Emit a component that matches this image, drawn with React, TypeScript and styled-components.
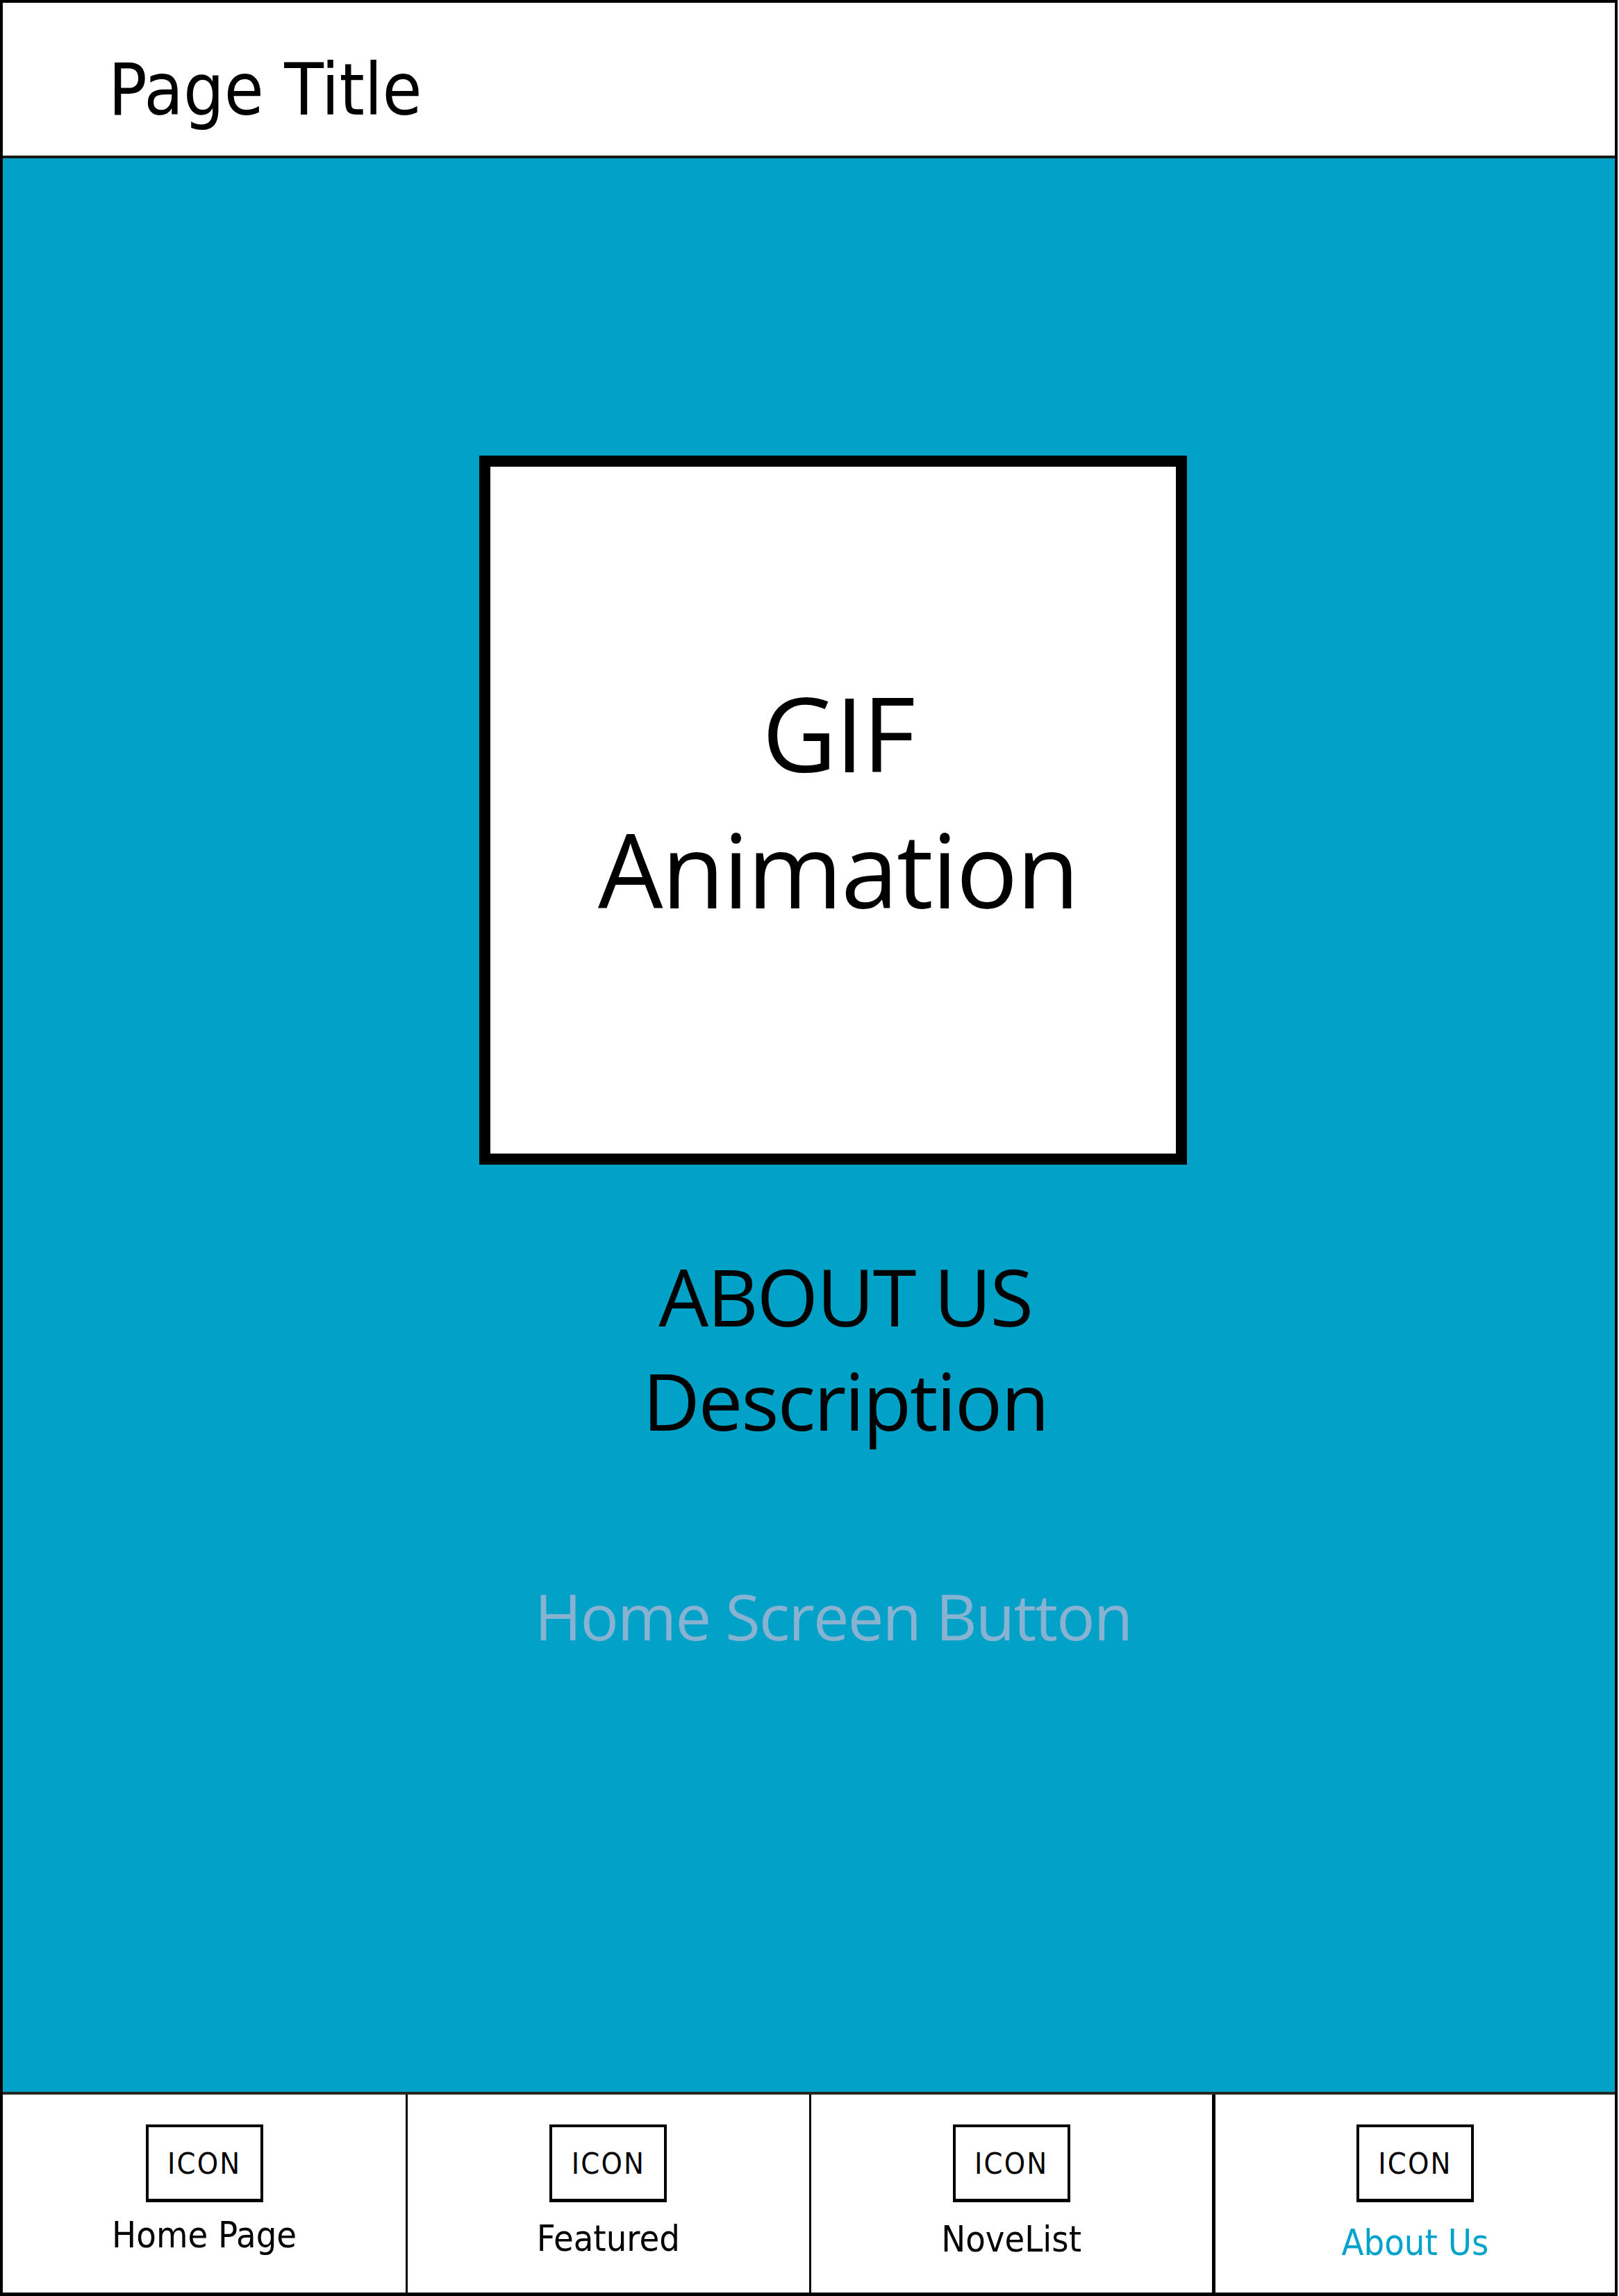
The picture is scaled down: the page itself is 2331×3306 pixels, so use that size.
import React from "react";
import styled, { createGlobalStyle } from "styled-components";

const GlobalStyle = createGlobalStyle`
  html, body {
    margin: 0;
    padding: 0;
    background: #ffffff;
  }
  #root {
    width: 2331px;
  }
`;

const tahomaLike = `"DejaVu Sans Condensed", "DejaVu Sans", "Liberation Sans", sans-serif`;
const myriadLike = `"Open Sans", "Noto Sans", "Liberation Sans", sans-serif`;

const Frame = styled.div`
  box-sizing: border-box;
  width: 2329px;
  height: 3306px;
  display: flex;
  flex-direction: column;
  border: 4px solid #000;
  border-bottom-width: 5px;
  background: #fff;
`;

const Header = styled.header`
  flex: none;
  height: 224px;
  box-sizing: border-box;
  border-bottom: 4px solid #1a1a1a;
  padding: 74px 0 0 152px;
  background: #fff;
`;

const PageTitle = styled.h1`
  margin: 0;
  font-family: ${tahomaLike};
  font-stretch: semi-condensed;
  font-weight: 400;
  font-size: 103px;
  line-height: 1;
  color: #000;
`;

const Main = styled.main`
  flex: 1;
  min-height: 0;
  background: #02a2c8;
  display: flex;
  flex-direction: column;
  align-items: center;
  padding: 428px 0 0 70px;
`;

const GifFrame = styled.div`
  box-sizing: border-box;
  width: 1019px;
  height: 1021px;
  border: 16px solid #000;
  background: #fff;
  display: flex;
  flex-direction: column;
  align-items: center;
  justify-content: center;
  padding: 0 0 27px 14px;
`;

const GifText = styled.div`
  font-family: ${myriadLike};
  font-size: 148px;
  line-height: 196px;
  letter-spacing: -0.015em;
  color: #000;
  text-align: center;
`;

const AboutBlock = styled.div`
  margin: 114px 0 0 35px;
  font-family: ${myriadLike};
  font-size: 114px;
  line-height: 150px;
  letter-spacing: -0.02em;
  color: #000;
  text-align: center;
`;

const HomeScreenButton = styled.button`
  margin-top: 181px;
  padding: 0;
  border: none;
  background: transparent;
  font-family: ${myriadLike};
  font-size: 92px;
  line-height: 1.2;
  letter-spacing: -0.02em;
  color: #88b2d2;
  cursor: pointer;
`;

const Nav = styled.nav`
  flex: none;
  height: 285px;
  border-top: 4px solid #262626;
  display: grid;
  grid-template-columns: repeat(4, 1fr);
  background: #fff;
`;

const Tab = styled.div<{ $divider: number }>`
  box-sizing: border-box;
  border-left: ${(p) => p.$divider}px solid #000;
  display: flex;
  flex-direction: column;
  align-items: center;
  padding-top: 43px;
`;

const IconBox = styled.div`
  box-sizing: border-box;
  width: 169px;
  height: 112px;
  border: 4px solid #000;
  border-bottom-width: 5px;
  display: flex;
  align-items: center;
  justify-content: center;
  font-family: ${tahomaLike};
  font-stretch: semi-condensed;
  font-size: 43px;
  letter-spacing: 0.05em;
  color: #000;
`;

const TabLabel = styled.div<{ $active?: boolean; $shift: number }>`
  margin-top: ${(p) => 20 + p.$shift}px;
  font-family: ${tahomaLike};
  font-stretch: semi-condensed;
  font-size: 52px;
  line-height: 1.2;
  color: ${(p) => (p.$active ? "#00a3cb" : "#000")};
`;

const tabs = [
  { label: "Home Page", divider: 0, shift: -4 },
  { label: "Featured", divider: 3, shift: 1 },
  { label: "NoveList", divider: 3, shift: 2 },
  { label: "About Us", divider: 5, shift: 7, active: true },
];

export default function App() {
  return (
    <>
      <GlobalStyle />
      <Frame>
        <Header>
          <PageTitle>Page Title</PageTitle>
        </Header>
        <Main>
          <GifFrame>
            <GifText>
              GIF
              <br />
              Animation
            </GifText>
          </GifFrame>
          <AboutBlock>
            ABOUT US
            <br />
            Description
          </AboutBlock>
          <HomeScreenButton type="button">Home Screen Button</HomeScreenButton>
        </Main>
        <Nav>
          {tabs.map((t) => (
            <Tab key={t.label} $divider={t.divider}>
              <IconBox>ICON</IconBox>
              <TabLabel $active={t.active} $shift={t.shift}>
                {t.label}
              </TabLabel>
            </Tab>
          ))}
        </Nav>
      </Frame>
    </>
  );
}
